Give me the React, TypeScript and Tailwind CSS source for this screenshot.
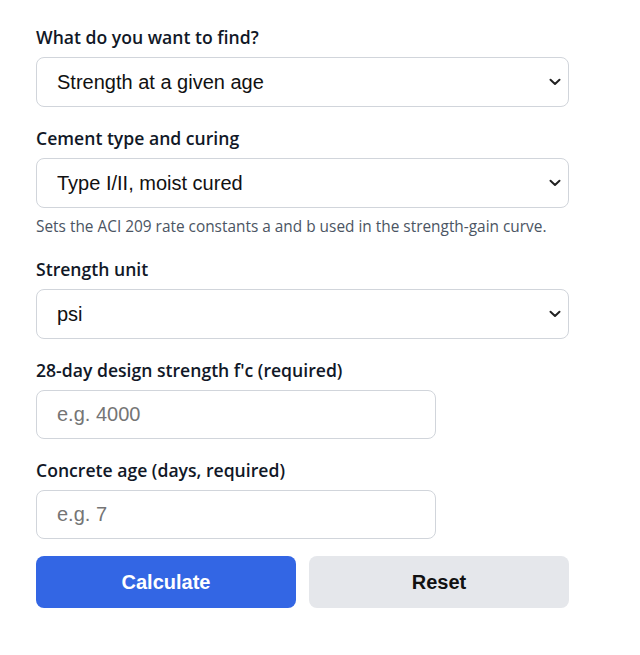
import React from "react";

const Chevron = () => (
  <svg
    className="pointer-events-none absolute right-[8px] top-1/2 -translate-y-1/2"
    width="12"
    height="8"
    viewBox="0 0 12 8"
    fill="none"
  >
    <path d="M1.5 1.8 L6 6 L10.5 1.8" stroke="#222" strokeWidth="2" strokeLinecap="round" strokeLinejoin="round" />
  </svg>
);

const labelCls =
  "block text-[17.6px] leading-[25px] font-semibold text-[#111827] mb-[7px] [font-family:'Open_Sans',sans-serif]";
const selectCls =
  "w-full h-[50px] appearance-none rounded-[8px] border border-[#d1d5db] bg-white pl-[20px] pr-[36px] text-[20px] text-[#111] outline-none [font-family:'Liberation_Sans',Arial,sans-serif]";
const inputCls =
  "w-[400px] h-[49px] rounded-[8px] border border-[#d1d5db] bg-white px-[20px] text-[20px] text-[#111] outline-none placeholder:text-[#757575] [font-family:'Liberation_Sans',Arial,sans-serif]";

function SelectField({ label, options, help }: { label: string; options: string[]; help?: string }) {
  return (
    <div className="flex flex-col">
      <label className={labelCls}>{label}</label>
      <div className="relative">
        <select className={selectCls} defaultValue={options[0]}>
          {options.map((o) => (
            <option key={o}>{o}</option>
          ))}
        </select>
        <Chevron />
      </div>
      {help && (
        <p className="mt-[8px] text-[15.4px] leading-[22px] text-[#4b5563] [font-family:'Open_Sans',sans-serif]">
          {help}
        </p>
      )}
    </div>
  );
}

function InputField({ label, placeholder }: { label: string; placeholder: string }) {
  return (
    <div className="flex flex-col">
      <label className={labelCls}>{label}</label>
      <input className={inputCls} placeholder={placeholder} />
    </div>
  );
}

export default function App() {
  return (
    <div className="min-h-[655px] w-[640px] bg-white">
      <div className="flex w-[533px] flex-col gap-[19px] pl-[36px] pt-[25px] box-content">
        <SelectField
          label="What do you want to find?"
          options={["Strength at a given age", "Age to reach a target strength"]}
        />
        <SelectField
          label="Cement type and curing"
          options={["Type I/II, moist cured", "Type III, moist cured", "Type I/II, steam cured", "Type III, steam cured"]}
          help="Sets the ACI 209 rate constants a and b used in the strength-gain curve."
        />
        <SelectField label="Strength unit" options={["psi", "MPa"]} />
        <InputField label="28-day design strength f'c (required)" placeholder="e.g. 4000" />
        <InputField label="Concrete age (days, required)" placeholder="e.g. 7" />
        <div className="grid grid-cols-2 gap-[13px] -mt-[2px]">
          <button className="h-[52px] rounded-[8px] bg-[#3366e4] text-[20px] font-bold text-white [font-family:'Liberation_Sans',Arial,sans-serif]">
            Calculate
          </button>
          <button className="h-[52px] rounded-[8px] bg-[#e5e7eb] text-[20px] font-bold text-[#111] [font-family:'Liberation_Sans',Arial,sans-serif]">
            Reset
          </button>
        </div>
      </div>
    </div>
  );
}
